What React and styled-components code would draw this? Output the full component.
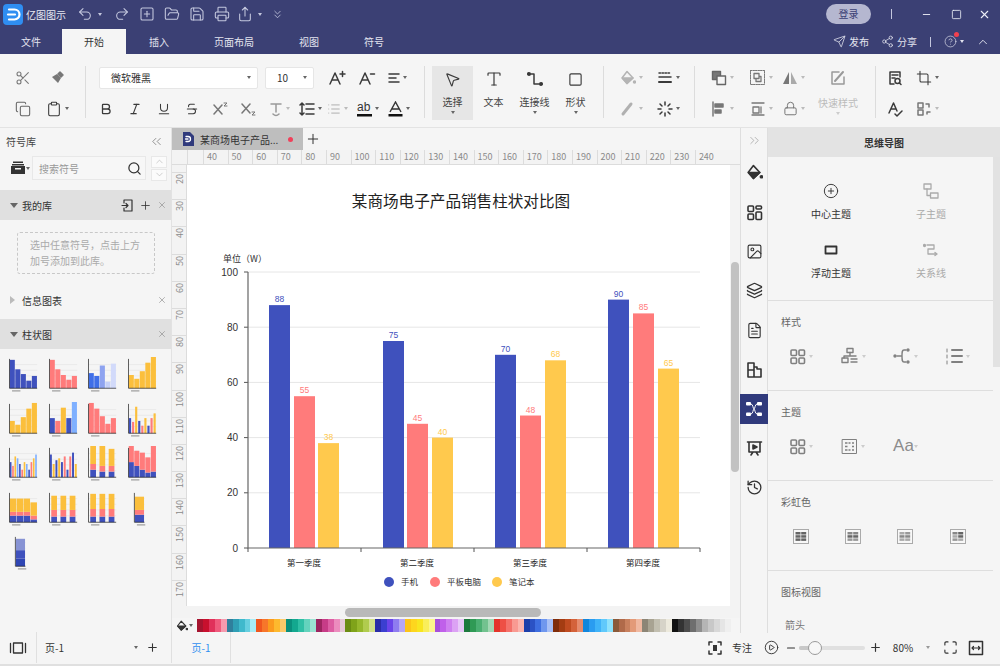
import React from 'react';
import styled, { createGlobalStyle } from 'styled-components';
import {
  Scissors, Copy, Clipboard, Bold, Italic, Underline, Strikethrough, MousePointer2, Type, Square,
  Search, Undo2, Redo2, SquarePlus, FolderOpen, Save, Printer, Share, ChevronsDown, Send, Share2,
  CircleHelp, ChevronUp, Minus, X, Plus, Image as ImageIcon, Layers, FileText, History, CirclePlus,
  ChevronsLeft, ChevronsRight, ChevronDown, List, Lock, CirclePlay, Maximize, Crop,
} from 'lucide-react';

const Global = createGlobalStyle`
  html, body { margin: 0; padding: 0; width: 1000px; height: 666px; overflow: hidden; }
  body { font-family: "Noto Sans CJK SC", "Liberation Sans", sans-serif; font-size: 10px; color: #333; background: #f5f5f5; }
  * { box-sizing: border-box; }
`;

const NAVY = '#3b4074';
const Shell = styled.div`display: flex; flex-direction: column; width: 1000px; height: 666px;`;

/* ---------- title bar ---------- */
const TitleBar = styled.header`display: flex; align-items: center; height: 28px; padding-right: 3px; background: ${NAVY}; color: #dfe1ee;`;
const LogoBox = styled.div`display: flex; width: 20px; height: 21px; margin-left: 3px; border-radius: 4px; background: #2f8ef2;`;
const AppName = styled.span`margin-left: 3px; width: 43px; font-size: 10px; color: #e8e9f2;`;
const QuickBtn = styled.button`
  all: unset; display: flex; align-items: center; justify-content: center; gap: 2px; width: ${p => p.$w || 25}px; height: 28px; color: #c4c7de;
`;
const TriangleEl = styled.i`
  display: inline-block; flex: none; width: 0; height: 0; margin-left: ${p => p.$gap ?? 3}px;
  border-left: 2.5px solid transparent; border-right: 2.5px solid transparent;
  border-top: 3px solid ${p => p.$c || '#666'};
`;
const Spring = styled.div`flex: 1;`;
const LoginPill = styled.button`
  all: unset; width: 45px; height: 20px; border-radius: 10px; background: #b5b7d0; color: #3b4074; text-align: center; line-height: 20px; font-size: 10px;
`;
const BarDivider = styled.i`display: block; width: 1px; height: 10px; background: #c4c7de;`;
const WinBtn = styled.button`all: unset; display: flex; align-items: center; justify-content: center; width: ${p => p.$w || 30}px; height: 28px; color: #eceef6;`;

const TabBar = styled.nav`display: flex; align-items: flex-end; height: 26px; background: ${NAVY};`;
const Tab = styled.div`
  width: ${p => p.$w}px; height: 25px; line-height: 25px; text-align: center; font-size: 10px;
  color: ${p => (p.$active ? '#333' : '#e3e4ef')}; background: ${p => (p.$active ? '#f5f5f5' : 'transparent')};
`;
const TabAction = styled.div`display: flex; align-items: center; gap: 3px; height: 25px; color: #e3e4ef; font-size: 10px; margin-left: ${p => p.$ml || 0}px;`;
const HelpWrap = styled.span`position: relative; display: flex;`;
const RedDot = styled.i`position: absolute; top: -3px; right: -2px; width: 5px; height: 5px; border-radius: 50%; background: #f2404f;`;

/* ---------- ribbon ---------- */
const Ribbon = styled.section`display: flex; height: 74px; background: #f5f5f5; border-bottom: 1px solid #e3e3e3;`;
const RibbonGroup = styled.div`
  flex: none; width: ${p => p.$w}px; padding-left: ${p => p.$pl || 0}px; padding-top: 8px; position: relative;
  &::after { content: ''; position: absolute; right: 0; top: 12px; width: 1px; height: 52px; background: ${p => (p.$last ? 'transparent' : '#dcdcdc')}; }
`;
const ToolRow = styled.div`display: flex; align-items: center; height: 31px; margin-left: ${p => p.$ml || 0}px;`;
const ToolCell = styled.div`
  display: flex; align-items: center; justify-content: center; flex: none; width: ${p => p.$w}px; height: 31px; margin-left: ${p => p.$ml || 0}px;
  color: ${p => (p.$off ? '#a9a9a9' : p.$c || '#3a3a3a')}; font-size: ${p => p.$fs || 13}px;
`;
const FontSelect = styled.div`
  display: flex; align-items: center; justify-content: space-between; flex: none; height: 22px; width: ${p => p.$w}px; margin-right: ${p => p.$mr || 0}px;
  padding: 0 6px 0 11px; background: #fff; border: 1px solid #e6e6e6; border-radius: 2px; font-size: 10px; color: #333;
`;
const TileRow = styled.div`display: flex; margin-top: 4px;`;
const Tile = styled.div`
  display: flex; flex-direction: column; align-items: center; width: 41px; height: 54px; padding-top: 2px;
  background: ${p => (p.$on ? '#e6e6e6' : 'transparent')}; color: #3a3a3a;
`;
const TileIcon = styled.div`display: flex; align-items: center; justify-content: center; height: 22px;`;
const TileLabel = styled.span`margin-top: 5px; line-height: 14px; font-size: 10px; color: #444;`;
const TileArrow = styled.i`
  display: block; margin-top: 2px; width: 0; height: 0; border-left: 2.5px solid transparent; border-right: 2.5px solid transparent; border-top: 3px solid ${p => p.$c || '#666'};
`;
const QuickLabel = styled.div`display: flex; flex-direction: column; align-items: center; flex: none; width: ${p => p.$w}px; height: 31px; padding-top: 3px; color: #bbb; font-size: 10px; line-height: 14px;`;

/* ---------- main ---------- */
const Main = styled.main`display: flex; height: 505px;`;

const LeftPanel = styled.aside`display: flex; flex-direction: column; flex: none; width: 172px; background: #f5f5f5; border-right: 1px solid #e2e2e2; overflow: hidden;`;
const PanelTitle = styled.div`display: flex; align-items: center; justify-content: space-between; height: 26px; padding: 0 7px 0 6px; font-size: 10px; color: #444;`;
const SearchRow = styled.div`display: flex; align-items: center; height: 28px; padding-left: 11px;`;
const DrawerBtn = styled.div`display: flex; align-items: center; width: 21px; color: #333;`;
const SearchBox = styled.div`display: flex; align-items: center; justify-content: space-between; width: 114px; height: 24px; padding: 0 3px 0 6px; background: #f7f7f7; border: 1px solid #e8e8e8; font-size: 10px; color: #999;`;
const Stepper = styled.div`display: flex; flex-direction: column; gap: 1px; margin-left: 5px;`;
const StepBtn = styled.div`display: flex; align-items: center; justify-content: center; width: 16px; height: 12px; background: #fbfbfb; border: 1px solid #e8e8e8; color: #aaa;`;
const LibHeader = styled.div`
  display: flex; align-items: center; height: ${p => p.$h || 30}px; margin-top: ${p => p.$mt || 0}px; padding: 0 4px 0 10px; gap: 5px;
  background: ${p => (p.$on ? '#e0e0e0' : 'transparent')}; color: #333; font-size: 10px;
`;
const LibMark = styled.i`
  width: 0; height: 0; flex: none;
  ${p => (p.$open
    ? 'border-left: 4px solid transparent; border-right: 4px solid transparent; border-top: 5px solid #666; margin-right:-1px;'
    : 'border-top: 4px solid transparent; border-bottom: 4px solid transparent; border-left: 5px solid #bbb; margin-right:2px;')}
`;
const LibName = styled.span`flex: 1;`;
const LibTool = styled.span`display: flex; color: ${p => p.$c || '#555'};`;
const DropHint = styled.div`margin: 12px 0 0 17px; width: 138px; height: 42px; padding: 4px 0 0 12px; border: 1.5px dashed #c8c8c8; border-radius: 3px; font-size: 10px; line-height: 16px; color: #aaa;`;
const ThumbGrid = styled.div`display: grid; grid-template-columns: repeat(4, 39.5px); grid-auto-rows: 44.5px; padding: 8px 0 0 7px;`;

const Center = styled.div`display: flex; flex-direction: column; flex: none; width: 568px;`;
const DocTabs = styled.div`display: flex; align-items: center; height: 22px; background: #f5f5f5;`;
const DocTab = styled.div`display: flex; align-items: center; width: 131px; height: 22px; padding-left: 10px; background: #bebebe; color: #333; font-size: 10px;`;
const DocTitle = styled.span`margin-left: 6px; width: 82px;`;
const DocDot = styled.i`width: 5px; height: 5px; border-radius: 50%; background: #f0405a; margin-left: 6px;`;
const AddTab = styled.span`display: flex; margin-left: 2px; color: #333;`;

const HRuler = styled.div`display: flex; height: 15px; padding-left: 15px; background: #f3f3f3; border-bottom: 1px solid #dcdcdc; overflow: hidden; color: #8a8a8a; font-size: 9px;`;
const HTick = styled.span`flex: none; width: ${p => p.$w || 24.6}px; height: 15px; padding-left: 3px; line-height: 14px; border-left: 1px solid #dcdcdc;`;
const CanvasRow = styled.div`position: relative; display: flex; height: 441px;`;
const VRuler = styled.div`flex: none; width: 15px; padding-top: 7px; background: #f3f3f3; border-right: 1px solid #dcdcdc; overflow: hidden; color: #8a8a8a; font-size: 9px;`;
const VTick = styled.div`
  display: flex; align-items: flex-start; justify-content: center; width: 15px; height: 27.2px; padding-top: 1px; border-top: 1px solid #dcdcdc;
  span { writing-mode: vertical-rl; transform: rotate(180deg); line-height: 12px; }
`;
const Page = styled.div`flex: 1; background: #fff;`;
const ChartSvg = styled.svg`display: block; width: 543px; height: 441px; font-family: "Noto Sans CJK SC", "Liberation Sans", sans-serif;`;
const VTrack = styled.div`flex: none; width: 10px; background: #f3f3f3;`;
const VThumb = styled.div`margin: 97px 0 0 1px; width: 8px; height: 210px; border-radius: 4px; background: #c2c2c2;`;
const HTrack = styled.div`display: flex; align-items: center; height: 12px; background: #f3f3f3; padding-left: 173px;`;
const HThumb = styled.div`width: 196px; height: 9px; border-radius: 5px; background: #b9b9b9;`;
const PaletteBar = styled.div`display: flex; align-items: center; height: 15px; background: #f5f5f5;`;
const PaletteBtn = styled.div`display: flex; align-items: center; justify-content: center; flex: none; width: 25px; color: #333;`;
const Chips = styled.div`display: flex; width: 534px; height: 13px;`;
const Chip = styled.i`flex: 1; background: ${p => p.$c};`;

const Rail = styled.div`display: flex; flex-direction: column; align-items: center; flex: none; width: 28px; background: #f5f5f5; border-left: 1px solid #dedede; border-right: 1px solid #dedede;`;
const RailTop = styled.div`display: flex; align-items: center; justify-content: center; height: 25px; color: #999;`;
const RailBtn = styled.div`
  display: flex; align-items: center; justify-content: center; flex: none; width: 28px; height: ${p => (p.$on ? 30 : 39.4)}px;
  margin: ${p => (p.$on ? '4.7px 0' : 0)}; background: ${p => (p.$on ? '#303a7c' : 'transparent')}; color: ${p => (p.$on ? '#fff' : '#333')};
`;

const RightPanel = styled.aside`position: relative; display: flex; flex-direction: column; flex: none; width: 232px; background: #f5f5f5;`;
const RightHead = styled.div`height: 29px; line-height: 29px; text-align: center; background: #e3e3e3; font-size: 10px; font-weight: 700; color: #333;`;
const RightBody = styled.div`width: 225px;`;
const RightThumb = styled.div`position: absolute; right: 0; top: 29px; width: 7px; height: 210px; background: #e2e2e2;`;
const TopicSection = styled.div`height: 144px; padding: 24px 0 0 13px; border-bottom: 1px solid #dedede;`;
const TopicGrid = styled.div`display: grid; grid-template-columns: 100px 100px; row-gap: 19px;`;
const TopicCell = styled.div`display: flex; flex-direction: column; align-items: center; height: 40px; color: ${p => (p.$off ? '#aaa' : '#333')};`;
const TopicIcon = styled.div`display: flex; align-items: center; justify-content: center; height: 20px; margin-bottom: 6px;`;
const TopicLabel = styled.span`line-height: 14px; font-size: 10px;`;
const PropSection = styled.div`height: 90px; padding-top: 14px; border-bottom: ${p => (p.$plain ? 0 : '1px solid #dedede')};`;
const PropTitle = styled.div`padding-left: 13px; line-height: 14px; font-size: 10px; color: #666;`;
const PropGrid = styled.div`display: grid; grid-template-columns: repeat(4, 52.2px); padding-left: 7px; margin-top: 16px; color: #808080;`;
const PropCell = styled.div`display: flex; align-items: center; justify-content: center; height: 22px;`;
const AaLabel = styled.span`font-family: "Liberation Sans", sans-serif; font-size: 17px; color: #8c8c8c;`;
const SubLabel = styled.div`padding: 18px 0 0 17px; color: #777; font-size: 10px;`;

/* ---------- status bar ---------- */
const StatusBar = styled.footer`display: flex; align-items: center; height: 33px; padding-bottom: 2px; background: #f5f5f5; border-bottom: 2px solid #e0e0e0; font-size: 10px; color: #333;`;
const StatusCell = styled.div`
  display: flex; align-items: center; justify-content: ${p => (p.$between ? 'space-between' : 'center')}; flex: none; width: ${p => p.$w}px; height: 31px;
  padding: ${p => (p.$between ? '0 4px 0 8px' : `0 ${p.$pr || 0}px 0 0`)}; border-right: ${p => (p.$sep ? '1px solid #e0e0e0' : 0)};
  color: ${p => p.$c || '#333'};
`;
const Slider = styled.div`position: relative; width: 66px; height: 4px; border-radius: 2px; background: #e0e0e0;`;
const SliderFill = styled.div`width: 15px; height: 4px; border-radius: 2px; background: #c8c8c8;`;
const SliderKnob = styled.div`position: absolute; left: 9px; top: -5px; width: 14px; height: 14px; border-radius: 50%; background: #f7f7f7; border: 1.5px solid #9a9a9a;`;

/* ---------- custom drawings ---------- */
const Svg = ({ s = 16, w, h, vb, children, sw = 1.5, ...r }) => (
  <svg width={w || s} height={h || s} viewBox={vb || `0 0 ${w || s} ${h || s}`} fill="none" stroke="currentColor" strokeWidth={sw} strokeLinecap="round" strokeLinejoin="round" {...r}>{children}</svg>
);
const Tri = ({ c, gap }) => <TriangleEl $c={c} $gap={gap} />;

const LogoMark = () => (
  <Svg w={20} h={21} stroke="#fff" sw={2.2}><path d="M6 5.5h5.5a5 5 0 0 1 0 10H6" /><path d="M5 10.5h7" /></Svg>
);
const Broom = () => <Svg stroke="#777"><path d="M11 2l3 3-2 2-3-3z" fill="#777" /><path d="M3 7l5-3 4 4-3 5z" fill="#777" stroke="none" /></Svg>;
const APlus = ({ sign }) => (
  <Svg w={18} h={16}><path d="M2 14L7 3l5 11M4 10h6" /><path d={sign === '+' ? 'M12 4h5M14.5 1.500v5' : 'M12.500 4h4'} /></Svg>
);
const AlignIcon = () => <Svg w={12} h={12}><path d="M1 2h10M1 6h7M1 10h10" /></Svg>;
const SupIcon = ({ sub }) => (
  <Svg w={16} h={14} stroke="#777"><path d={sub ? 'M1 2l8 9M9 2l-8 9' : 'M1 3l8 9M9 3l-8 9'} /><path d={sub ? 'M11 10h3l-3 3h3' : 'M11 1h3l-3 3h3'} strokeWidth={1} /></Svg>
);
const TUnder = () => <Svg w={14} h={16} stroke="#999"><path d="M2 3h10M7 3v8M4 13c2 2 4 2 6 0" /></Svg>;
const LineSp = () => <Svg w={16} h={14}><path d="M3 1v12M1 3l2-2 2 2M1 11l2 2 2-2M7 2h8M7 7h8M7 12h8" /></Svg>;
const AbIcon = () => (
  <svg width="15" height="16" viewBox="0 0 15 16"><rect x="0" y="13" width="15" height="2.500" fill="#111" /><text x="0" y="10" fontSize="12" fill="#333" fontFamily="Liberation Sans">ab</text></svg>
);
const ACol = () => (
  <svg width="15" height="16" viewBox="0 0 15 16"><rect x="0.500" y="13" width="14" height="2.500" fill="#111" /><path d="M2 11L7.500 1 13 11M4 8h7" stroke="#333" strokeWidth="1.400" fill="none" /></svg>
);
const Connector = () => <Svg><circle cx="2" cy="3" r="1.300" fill="currentColor" /><circle cx="14" cy="13" r="1.300" fill="currentColor" /><path d="M4 3h3v10h5" /></Svg>;
const Fill = ({ c = '#aaa', s = 16 }) => (
  <Svg s={s} vb="0 0 16 16" stroke={c}><path d="M7 1.500L2 8l5 5.500L13 8z" /><path d="M2.500 8H13L7 13.500z" fill={c} /><circle cx="14.500" cy="12" r="1" fill={c} /></Svg>
);
const Dashes = () => <Svg><path d="M2 3h12" strokeDasharray="1.500 1.500" /><path d="M2 7h12" /><path d="M2 12h12" strokeWidth={2} /></Svg>;
const Pen = () => <Svg stroke="#b0b0b0"><path d="M3 13L11 3" strokeWidth={3} /></Svg>;
const Spark = () => <Svg><path d="M8 1v3M8 12v3M1 8h3M12 8h3M3 3l2 2M11 11l2 2M13 3l-2 2M5 11l-2 2" /></Svg>;
const Front = () => (
  <Svg stroke="#666" sw={1.4}><rect x="1.500" y="1.500" width="8" height="8" fill="#777" /><rect x="6" y="6" width="8.500" height="8.500" fill="#f5f5f5" /></Svg>
);
const GroupIc = () => (
  <Svg w={17} h={17} stroke="#777" sw={1}><rect x="1.500" y="1.500" width="14" height="14" strokeDasharray="1.500 1" /><path d="M5 4.500h5v5H5zM7 9.500v3h5v-5h-2" strokeWidth={1.300} /></Svg>
);
const Flip = () => <svg width="16" height="14" viewBox="0 0 16 14"><path d="M7 1v12H1z" fill="#777" /><path d="M9 1v12h6z" fill="#aaa" /></svg>;
const Quick = () => <Svg stroke="#999"><path d="M9 2H2v12h12V7" /><path d="M5 11l8-9" strokeWidth={2} /></Svg>;
const AlignL = () => <Svg stroke="#777"><path d="M2 1v14" /><rect x="4" y="3" width="8" height="3" fill="#777" /><rect x="4" y="9" width="6" height="3" fill="#777" /></Svg>;
const DistV = () => <Svg stroke="#777" sw={1.300}><path d="M2 2h12M2 14h12" /><rect x="3" y="6" width="6" height="6" /><path d="M11 6v6" /></Svg>;
const DocFind = () => <Svg><path d="M13 7V2H3v12h4M5 5h6M5 8h3" /><circle cx="10.500" cy="11" r="2.500" /><path d="M12.500 13l1.500 1.500" /></Svg>;
const SpellA = () => <Svg><path d="M2 12L6.500 2 10 10M4 8h5M8 13l2 2 5-5" /></Svg>;
const Replace = () => <Svg stroke="#777"><rect x="2" y="2" width="5" height="5" /><rect x="2" y="9" width="5" height="5" /><path d="M10 3h3v3M14 11h-3v2" /></Svg>;
const DocLogo = () => (
  <Svg w={12} h={14} stroke="#fff" sw={1.300}><path d="M1 0h7l4 4v10H1z" fill="#303a7c" stroke="none" /><path d="M4 4.500h2a2.500 2.500 0 0 1 0 5H4M3.500 7H6" /></Svg>
);
const Drawer = () => (
  <svg width="14" height="14" viewBox="0 0 14 14"><rect x="0" y="5" width="14" height="8" fill="#333" /><rect x="2" y="0.500" width="10" height="1.500" fill="#333" /><rect x="1" y="3" width="12" height="1.500" fill="#333" /><rect x="4" y="7" width="6" height="1.500" fill="#f5f5f5" /></svg>
);
const Import = () => <Svg w={13} h={13} sw={1.200}><path d="M3 1h8v11H3V9M3 4V1" /><path d="M1 6.500h6M5 4.500l2 2-2 2" /></Svg>;
const FourSq = () => (
  <Svg s={17} sw={1.600}><rect x="2" y="2" width="5.500" height="5.500" rx="1" /><rect x="10" y="2" width="5.500" height="5.500" rx="1" /><rect x="2" y="10" width="5.500" height="5.500" rx="1" /><rect x="10" y="10" width="5.500" height="5.500" rx="1" /></Svg>
);
const LayoutIc = () => <Svg s={17} sw={1.600}><rect x="2" y="2" width="5.500" height="5.500" rx="1" /><rect x="10" y="2" width="5.500" height="3" rx="1" /><rect x="2" y="10" width="5.500" height="5.500" rx="1" /><rect x="10" y="8" width="5.500" height="7.500" rx="1" /></Svg>;
const PuzzleIc = () => <Svg s={17} sw={1.600}><path d="M2 2h6v4h3v2h4v8H2zM2 9h6v7M8 6v3" /></Svg>;
const MindIc = () => (
  <svg width="16" height="14" viewBox="0 0 16 14" fill="#fff"><rect x="0" y="0" width="5" height="3.500" rx="1" /><rect x="11" y="0" width="5" height="3.500" rx="1" /><rect x="0" y="10.500" width="5" height="3.500" rx="1" /><rect x="11" y="10.500" width="5" height="3.500" rx="1" /><path d="M5 2c2 0 2 5 3 5s1-5 3-5M5 12c2 0 2-5 3-5s1 5 3 5" stroke="#fff" strokeWidth="1" fill="none" /></svg>
);
const Board = () => <Svg s={17} sw={1.600}><path d="M1.500 2h14M3 2v10h11V2M5 15l2-3M12 15l-2-3" /><path d="M7 5l4 2-4 2z" fill="currentColor" /></Svg>;
const SubTopic = () => <Svg w={16} h={16} sw={1.300}><rect x="1" y="1" width="7" height="5" /><rect x="7.500" y="10" width="7.500" height="5" /><path d="M4 6v6.500h3.500" /></Svg>;
const FloatTopic = () => <Svg w={14} h={10} sw={1.800}><rect x="1.500" y="1.500" width="11" height="7" /></Svg>;
const Relation = () => <Svg w={16} h={14} sw={1.300}><circle cx="1.500" cy="2.500" r="1" fill="currentColor" /><path d="M4 2h7v4H5v5h7M12 9.500l2 1.500-2 1.500" /></Svg>;
const TreeIc = () => <Svg s={18} sw={1.400}><rect x="6" y="1.500" width="6" height="4" /><path d="M9 5.500V9M3 9h12M3 9v2" /><rect x="1" y="11" width="6" height="4.500" /><path d="M10 12h6M10 15h6" /></Svg>;
const FishIc = () => <Svg s={18} sw={1.400}><circle cx="2" cy="9" r="1" fill="currentColor" /><path d="M4 9h5M13 3h-2c-2 0-2 2-2 6s0 6 2 6h2" /><circle cx="15" cy="3" r="1" fill="currentColor" /><circle cx="15" cy="15" r="1" fill="currentColor" /></Svg>;
const NumIc = () => <Svg s={18} sw={2}><path d="M7 3h10M7 9h10M7 15h10" /><path d="M2 2v3M2 8v3M2 14v3" strokeWidth={1} /></Svg>;
const DotGrid = () => <Svg s={17} sw={1}><rect x="1.500" y="1.500" width="14" height="14" /><path d="M4 5h2.500M7.500 5h2M11 5h2M4 8.500h2.500M11 8.500h2M4 12h2.500M7.500 12h2M11 12h2" strokeWidth={1.500} strokeLinecap="butt" /></Svg>;
const Rainbow = ({ v }) => {
  const fills = [['#666', '#666', '#666', '#666', '#666', '#666'], ['#888', '#888', '#666', '#666', '#999', '#999'], ['#aaa', '#999', '#888', '#888', '#aaa', '#aaa'], ['#888', '#666', '#aaa', '#666', '#999', '#aaa']][v];
  return (
    <svg width="16" height="15" viewBox="0 0 16 15">
      <rect x="0.500" y="0.500" width="15" height="14" fill="#f8f8f8" stroke="#aaa" />
      {fills.map((f, i) => <rect key={i} x={2.5 + (i % 2) * 5.7} y={3 + Math.floor(i / 2) * 3.2} width="5" height="2.500" fill={f} />)}
    </svg>
  );
};
const Slide = () => <Svg w={18} h={14} sw={1.300}><rect x="4.500" y="2" width="9" height="10" /><path d="M1.500 2.500v9M16.500 2.500v9" /></Svg>;
const Focus = () => <Svg sw={1.500}><path d="M2 5V2h3M11 2h3v3M14 11v3h-3M5 14H2v-3" /><rect x="6" y="5" width="4" height="6" fill="currentColor" stroke="none" /></Svg>;
const FitW = () => <Svg sw={1.500}><rect x="1.500" y="1.500" width="13" height="13" /><path d="M4.500 8h7M5.500 6.500L4 8l1.500 1.500M10.500 6.500L12 8l-1.500 1.500" strokeWidth={1.200} /></Svg>;

/* ---------- symbol thumbnails ---------- */
const B = '#3f51bd', R = '#ff7b7b', Y = '#fbbf3c', L = '#7fb0ff';
const THUMBS = [
  { bars: [[B, 30], [B, 20], [B, 15], [B, 8], [B, 13]] },
  { bars: [[R, 30], [R, 20], [R, 14], [R, 9], [R, 13]] },
  { bars: [['#3f6fe8', 16], ['#3f6fe8', 13], ['#8ea3f0', 24], ['#c5d0f8', 7], ['#d2dafa', 26]] },
  { bars: [[Y, 14], [Y, 10], [Y, 18], [Y, 27], [Y, 33]] },
  { bars: [[Y, 13], [Y, 9], [Y, 17], [Y, 26], [Y, 32]] },
  { bars: [[B, 16], [R, 13], [Y, 27], [B, 16], [L, 33]] },
  { bars: [[R, 32], [R, 26], [R, 18], [R, 10], [R, 16]] },
  { bars: [[B, 16], [R, 12], [Y, 28], [B, 13], [R, 8], [Y, 16], [B, 8], [R, 16], [Y, 21]] },
  { bars: [[B, 16], [R, 12], [Y, 22], [L, 20], [B, 14], [R, 8], [Y, 16], [L, 14], [B, 8], [R, 16], [Y, 20], [L, 24]] },
  { bars: [[B, 24], [Y, 14], [B, 18], [Y, 20], [B, 16], [R, 22], [B, 8], [R, 22], [B, 26], [Y, 14]] },
  { wide: true, bars: [[[B, 8], [R, 6], [Y, 20]], [[B, 6], [R, 6], [Y, 22]], [[B, 6], [R, 6], [Y, 18]]] },
  { tight: true, bars: [[[B, 16], [R, 18]], [[B, 12], [R, 16]], [[B, 8], [R, 18]], [[B, 5], [R, 16]], [[B, 6], [R, 28]]] },
  { tight: true, bars: [[[B, 7], [R, 4], [Y, 14]], [[B, 7], [R, 4], [Y, 14]], [[B, 7], [R, 4], [Y, 14]], [[B, 3], [R, 4], [Y, 14]]] },
  { wide: true, bars: [[[B, 6], [R, 7], [Y, 15]], [[B, 6], [R, 7], [Y, 15]], [[B, 6], [R, 7], [Y, 15]]] },
  { wide: true, bars: [[[B, 6], [R, 8], [Y, 16]], [[B, 6], [R, 8], [Y, 16]], [[B, 6], [R, 8], [Y, 16]]] },
  { single: true, bars: [[[B, 8], [R, 5], [Y, 14]]] },
  { single: true, bars: [[['#2f46b4', 8], ['#3f51bd', 9], ['#8793d4', 12]]] },
];
const Thumb = ({ t }) => {
  const base = 33, left = t.single ? 10 : 3, right = t.single ? 22 : 36;
  const n = t.bars.length;
  const slot = (right - left) / n;
  const w = t.tight ? slot - 0.5 : t.wide ? slot * 0.62 : slot * (n > 6 ? 0.7 : 0.92);
  return (
    <svg width="31" height="36" viewBox="0 0 37 38" preserveAspectRatio="none">
      {[8, 14, 20, 26].map(y => <line key={y} x1={left} x2={right} y1={y} y2={y} stroke="#ddd" strokeWidth="0.500" />)}
      {t.bars.map((b, i) => {
        const x = left + i * slot + (slot - w) / 2;
        if (typeof b[0] === 'string') return <rect key={i} x={x} y={base - b[1]} width={w} height={b[1]} fill={b[0]} />;
        let y = base;
        return <g key={i}>{b.map(([c, h], j) => { y -= h; return <rect key={j} x={x} y={y} width={w} height={h} fill={c} />; })}</g>;
      })}
      <path d={`M${left} 2V${base}H${right}`} stroke="#222" strokeWidth="0.800" fill="none" />
      <rect x={left + 3} y="35" width="10" height="1.500" fill="#aaa" />
    </svg>
  );
};

/* ---------- chart ---------- */
const GROUPS = [
  { name: '第一季度', cx: 304, xs: [269, 294, 318], v: [88, 55, 38] },
  { name: '第二季度', cx: 417, xs: [383, 407, 432], v: [75, 45, 40] },
  { name: '第三季度', cx: 530, xs: [495, 520, 545], v: [70, 48, 68] },
  { name: '第四季度', cx: 643, xs: [608, 633, 658], v: [90, 85, 65] },
];
const BAR = ['#3f51bd', '#ff7b7b', '#ffc94d'];
const yOf = v => 548 - v * 2.76;
const Chart = () => (
  <ChartSvg viewBox="187 165 543 441">
    <text x="461" y="207" fontSize="15.600" textAnchor="middle" fill="#222">某商场电子产品销售柱状对比图</text>
    <text x="223" y="262" fontSize="9" fill="#333">单位（W）</text>
    {[100, 80, 60, 40, 20].map(v => <line key={v} x1="248" x2="700" y1={yOf(v)} y2={yOf(v)} stroke="#e6e6e6" />)}
    {[100, 80, 60, 40, 20, 0].map(v => (
      <g key={v}>
        <line x1="244" x2="248" y1={yOf(v)} y2={yOf(v)} stroke="#555" />
        <text x="238" y={yOf(v) + 3.5} fontSize="10" textAnchor="end" fill="#333" fontFamily="Liberation Sans">{v}</text>
      </g>
    ))}
    {GROUPS.map(g => (
      <g key={g.name}>
        {g.v.map((v, i) => (
          <g key={i}>
            <rect x={g.xs[i]} y={yOf(v)} width="21" height={v * 2.76} fill={BAR[i]} />
            <text x={g.xs[i] + 10.5} y={yOf(v) - 3} fontSize="8.500" textAnchor="middle" fill={BAR[i]} fontFamily="Liberation Sans">{v}</text>
          </g>
        ))}
        <text x={g.cx} y="566" fontSize="8.500" textAnchor="middle" fill="#222">{g.name}</text>
      </g>
    ))}
    <path d="M248 272V548H700" stroke="#666" strokeWidth="1.200" fill="none" />
    {[248, 361, 474, 587, 700].map(x => <line key={x} x1={x} x2={x} y1="548" y2="552" stroke="#555" />)}
    {[[389, '手机', 0], [435, '平板电脑', 1], [497, '笔记本', 2]].map(([x, t, i]) => (
      <g key={t}>
        <circle cx={x} cy="582" r="5" fill={BAR[i]} />
        <text x={x + 12} y="585" fontSize="8.500" fill="#333">{t}</text>
      </g>
    ))}
  </ChartSvg>
);

const PALETTE = [
  '#a5142f,#c8102e,#e0315a,#ef5a7c,#f59aae', '#2f7f9c,#2f9fb5,#3fb9cc,#66cfe0,#a8ecf5',
  '#f0561e,#f7762a,#fb9a1e,#fdb92e,#fcc96a', '#0a8f7c,#13a88f,#2fbfa5,#63d3bd,#9be3d3',
  '#9c2560,#c73c87,#dd5ea3,#ec8cbe,#e5c9d6', '#6a8c12,#7fa31a,#96b82c,#b0cc4e,#d2e08a',
  '#2a2ca8,#3b3fd0,#6a44ea,#8f7cf0,#b6a6f5', '#fcc418,#fdd61e,#f8e520,#f9ee5a,#fbf58c',
  '#a64fdc,#c060ea,#cf80f0,#dca2f4,#e8c8f8', '#1d7a3e,#2f9a55,#4aaf72,#72c28f,#a2d8b4',
  '#e4332a,#ee4f45,#f4716a,#f99a92,#fbb5ae', '#1c3faa,#2b52c4,#3e6ee0,#6f97ee,#a8c0f6',
  '#7f2d0a,#a33c12,#bf4b20,#d4623a,#e68b6c', '#1186dc,#2a9cf0,#3fb3f8,#60c9fb,#8ee2fc',
  '#8a5a3a,#b06a4a,#c8805e,#e39a78,#f0b8a0', '#8c8576,#a8a392,#c2bfb0,#d6d3c8,#ece9dc',
  '#111111,#333333,#4d4d4d,#6e6e6e,#8e8e8e', '#b5b5b5,#c8c8c8,#d8d8d8,#e5e5e5,#efefef',
].join(',').split(',');

const hTicks = Array.from({ length: 22 }, (_, i) => 30 + i * 10);
const vTicks = Array.from({ length: 16 }, (_, i) => 20 + i * 10);

const ic = { size: 16, strokeWidth: 1.6 };

export default function App() {
  return (
    <Shell>
      <Global />
      <TitleBar>
        <LogoBox><LogoMark /></LogoBox>
        <AppName>亿图图示</AppName>
        <QuickBtn $w={40}><Undo2 {...ic} /><Tri c="#c4c7de" /></QuickBtn>
        <QuickBtn $w={25}><Redo2 {...ic} /></QuickBtn>
        <QuickBtn><SquarePlus {...ic} /></QuickBtn>
        <QuickBtn><FolderOpen {...ic} /></QuickBtn>
        <QuickBtn><Save {...ic} /></QuickBtn>
        <QuickBtn><Printer {...ic} /></QuickBtn>
        <QuickBtn $w={30}><Share {...ic} /><Tri c="#c4c7de" /></QuickBtn>
        <QuickBtn $w={26}><ChevronsDown size={13} strokeWidth={1.5} /></QuickBtn>
        <Spring />
        <LoginPill>登录</LoginPill>
        <WinBtn $w={40}><BarDivider /></WinBtn>
        <WinBtn><Minus size={11} strokeWidth={2} /></WinBtn>
        <WinBtn><Square size={11} strokeWidth={1.8} /></WinBtn>
        <WinBtn $w={26}><X size={13} strokeWidth={2} /></WinBtn>
      </TitleBar>
      <TabBar>
        <Tab $w={62}>文件</Tab>
        <Tab $w={64} $active>开始</Tab>
        <Tab $w={66}>插入</Tab>
        <Tab $w={84}>页面布局</Tab>
        <Tab $w={66}>视图</Tab>
        <Tab $w={64}>符号</Tab>
        <Spring />
        <TabAction><Send size={13} strokeWidth={1.4} />发布</TabAction>
        <TabAction $ml={12}><Share2 size={13} strokeWidth={1.4} />分享</TabAction>
        <TabAction $ml={13}><BarDivider /></TabAction>
        <TabAction $ml={13}><HelpWrap><CircleHelp size={13} strokeWidth={1.2} /><RedDot /></HelpWrap><Tri c="#e3e4ef" gap={0} /></TabAction>
        <TabAction $ml={12}><ChevronUp size={14} strokeWidth={1.6} /></TabAction>
        <TabAction $ml={10} />
      </TabBar>

      <Ribbon>
        <RibbonGroup $w={86} $pl={6}>
          <ToolRow>
            <ToolCell $w={34} $c="#777"><Scissors {...ic} /></ToolCell>
            <ToolCell $w={34}><Broom /></ToolCell>
          </ToolRow>
          <ToolRow>
            <ToolCell $w={34} $c="#666"><Copy {...ic} /></ToolCell>
            <ToolCell $w={34}><Clipboard {...ic} /><Tri /></ToolCell>
          </ToolRow>
        </RibbonGroup>
        <RibbonGroup $w={339} $pl={5}>
          <ToolRow $ml={8}>
            <FontSelect $w={159} $mr={7}>微软雅黑<Tri gap={0} /></FontSelect>
            <FontSelect $w={49}>10<Tri gap={0} /></FontSelect>
            <ToolCell $w={30} $ml={8}><APlus sign="+" /></ToolCell>
            <ToolCell $w={30}><APlus sign="-" /></ToolCell>
            <ToolCell $w={30}><AlignIcon /><Tri /></ToolCell>
          </ToolRow>
          <ToolRow>
            <ToolCell $w={29}><Bold size={14} strokeWidth={2.2} /></ToolCell>
            <ToolCell $w={29}><Italic size={14} strokeWidth={2} /></ToolCell>
            <ToolCell $w={29}><Underline size={14} strokeWidth={1.8} /></ToolCell>
            <ToolCell $w={28}><Strikethrough size={14} strokeWidth={1.8} /></ToolCell>
            <ToolCell $w={29}><SupIcon /></ToolCell>
            <ToolCell $w={28}><SupIcon sub /></ToolCell>
            <ToolCell $w={32}><TUnder /><Tri c="#bbb" /></ToolCell>
            <ToolCell $w={30}><LineSp /><Tri /></ToolCell>
            <ToolCell $w={24} $off><List size={14} strokeWidth={1.6} /><Tri c="#bbb" /></ToolCell>
            <ToolCell $w={38}><AbIcon /><Tri /></ToolCell>
            <ToolCell $w={24}><ACol /><Tri /></ToolCell>
          </ToolRow>
        </RibbonGroup>
        <RibbonGroup $w={179} $pl={7}>
          <TileRow>
            <Tile $on><TileIcon><MousePointer2 size={17} strokeWidth={1.6} /></TileIcon><TileLabel>选择</TileLabel><TileArrow /></Tile>
            <Tile><TileIcon><Type size={18} strokeWidth={1.6} /></TileIcon><TileLabel>文本</TileLabel></Tile>
            <Tile><TileIcon><Connector /></TileIcon><TileLabel>连接线</TileLabel><TileArrow /></Tile>
            <Tile><TileIcon><Square size={15} strokeWidth={1.8} /></TileIcon><TileLabel>形状</TileLabel><TileArrow /></Tile>
          </TileRow>
        </RibbonGroup>
        <RibbonGroup $w={91} $pl={8}>
          <ToolRow>
            <ToolCell $w={38}><Fill c="#b4b4b4" /><Tri c="#bbb" /></ToolCell>
            <ToolCell $w={36}><Dashes /><Tri /></ToolCell>
          </ToolRow>
          <ToolRow>
            <ToolCell $w={38}><Pen /><Tri c="#bbb" /></ToolCell>
            <ToolCell $w={36}><Spark /><Tri /></ToolCell>
          </ToolRow>
        </RibbonGroup>
        <RibbonGroup $w={181} $pl={8}>
          <ToolRow>
            <ToolCell $w={38}><Front /><Tri c="#bbb" /></ToolCell>
            <ToolCell $w={40}><GroupIc /><Tri c="#bbb" /></ToolCell>
            <ToolCell $w={25}><Flip /><Tri c="#bbb" /></ToolCell>
            <ToolCell $w={64}><Quick /></ToolCell>
          </ToolRow>
          <ToolRow>
            <ToolCell $w={38}><AlignL /><Tri c="#bbb" /></ToolCell>
            <ToolCell $w={40}><DistV /><Tri c="#bbb" /></ToolCell>
            <ToolCell $w={25} $c="#777"><Lock size={15} strokeWidth={1.6} /><Tri c="#bbb" /></ToolCell>
            <QuickLabel $w={64}>快速样式<TileArrow $c="#ccc" /></QuickLabel>
          </ToolRow>
        </RibbonGroup>
        <RibbonGroup $w={124} $pl={4} $last>
          <ToolRow>
            <ToolCell $w={30}><DocFind /></ToolCell>
            <ToolCell $w={35}><Crop {...ic} /><Tri /></ToolCell>
          </ToolRow>
          <ToolRow>
            <ToolCell $w={30}><SpellA /></ToolCell>
            <ToolCell $w={35}><Replace /><Tri c="#bbb" /></ToolCell>
          </ToolRow>
        </RibbonGroup>
      </Ribbon>

      <Main>
        <LeftPanel>
          <PanelTitle>符号库<ChevronsLeft size={15} strokeWidth={1.1} color="#666" /></PanelTitle>
          <SearchRow>
            <DrawerBtn><Drawer /><Tri gap={1} /></DrawerBtn>
            <SearchBox>搜索符号<Search size={15} strokeWidth={2} color="#333" /></SearchBox>
            <Stepper>
              <StepBtn><ChevronUp size={11} strokeWidth={1.2} /></StepBtn>
              <StepBtn><ChevronDown size={11} strokeWidth={1.2} /></StepBtn>
            </Stepper>
          </SearchRow>
          <LibHeader $on $mt={8}>
            <LibMark $open /><LibName>我的库</LibName>
            <LibTool $c="#333"><Import /></LibTool>
            <LibTool $c="#333"><Plus size={13} strokeWidth={1.5} /></LibTool>
            <LibTool $c="#888"><X size={10} strokeWidth={1.5} /></LibTool>
          </LibHeader>
          <DropHint>选中任意符号，点击上方<br />加号添加到此库。</DropHint>
          <LibHeader $mt={11} $h={30}>
            <LibMark /><LibName>信息图表</LibName>
            <LibTool $c="#888"><X size={10} strokeWidth={1.5} /></LibTool>
          </LibHeader>
          <LibHeader $on $mt={4}>
            <LibMark $open /><LibName>柱状图</LibName>
            <LibTool $c="#888"><X size={10} strokeWidth={1.5} /></LibTool>
          </LibHeader>
          <ThumbGrid>{THUMBS.map((t, i) => <Thumb key={i} t={t} />)}</ThumbGrid>
        </LeftPanel>

        <Center>
          <DocTabs>
            <DocTab><DocLogo /><DocTitle>某商场电子产品...</DocTitle><DocDot /></DocTab>
            <AddTab><Plus size={16} strokeWidth={1.5} /></AddTab>
          </DocTabs>
          <HRuler>{hTicks.map(n => <HTick key={n} $w={n === 30 ? 16 : 24.6}>{n === 30 ? '' : n}</HTick>)}</HRuler>
          <CanvasRow>
            <VRuler>{vTicks.map(n => <VTick key={n}><span>{n}</span></VTick>)}</VRuler>
            <Page><Chart /></Page>
            <VTrack><VThumb /></VTrack>
          </CanvasRow>
          <HTrack><HThumb /></HTrack>
          <PaletteBar>
            <PaletteBtn><Fill c="#333" s={12} /><Tri gap={1} /></PaletteBtn>
            <Chips>{PALETTE.map((c, i) => <Chip key={i} $c={c} />)}</Chips>
          </PaletteBar>
        </Center>

        <Rail>
          <RailTop><ChevronsRight size={15} strokeWidth={1.1} /></RailTop>
          <RailBtn><Fill c="#333" s={17} /></RailBtn>
          <RailBtn><LayoutIc /></RailBtn>
          <RailBtn><ImageIcon size={17} strokeWidth={1.6} /></RailBtn>
          <RailBtn><Layers size={17} strokeWidth={1.8} /></RailBtn>
          <RailBtn><FileText size={17} strokeWidth={1.6} /></RailBtn>
          <RailBtn><PuzzleIc /></RailBtn>
          <RailBtn $on><MindIc /></RailBtn>
          <RailBtn><Board /></RailBtn>
          <RailBtn><History size={17} strokeWidth={1.8} /></RailBtn>
        </Rail>

        <RightPanel>
          <RightHead>思维导图</RightHead>
          <RightThumb />
          <RightBody>
            <TopicSection>
              <TopicGrid>
                <TopicCell><TopicIcon><CirclePlus size={16} strokeWidth={1.4} /></TopicIcon><TopicLabel>中心主题</TopicLabel></TopicCell>
                <TopicCell $off><TopicIcon><SubTopic /></TopicIcon><TopicLabel>子主题</TopicLabel></TopicCell>
                <TopicCell><TopicIcon><FloatTopic /></TopicIcon><TopicLabel>浮动主题</TopicLabel></TopicCell>
                <TopicCell $off><TopicIcon><Relation /></TopicIcon><TopicLabel>关系线</TopicLabel></TopicCell>
              </TopicGrid>
            </TopicSection>
            <PropSection>
              <PropTitle>样式</PropTitle>
              <PropGrid>
                <PropCell><FourSq /><Tri c="#ccc" /></PropCell>
                <PropCell><TreeIc /><Tri c="#ccc" /></PropCell>
                <PropCell><FishIc /><Tri c="#ccc" /></PropCell>
                <PropCell><NumIc /><Tri c="#ccc" /></PropCell>
              </PropGrid>
            </PropSection>
            <PropSection>
              <PropTitle>主题</PropTitle>
              <PropGrid>
                <PropCell><FourSq /><Tri c="#ccc" /></PropCell>
                <PropCell><DotGrid /><Tri c="#ccc" /></PropCell>
                <PropCell><AaLabel>Aa</AaLabel><Tri c="#ccc" gap={0} /></PropCell>
              </PropGrid>
            </PropSection>
            <PropSection>
              <PropTitle>彩虹色</PropTitle>
              <PropGrid>
                {[0, 1, 2, 3].map(v => <PropCell key={v}><Rainbow v={v} /></PropCell>)}
              </PropGrid>
            </PropSection>
            <PropSection $plain>
              <PropTitle>图标视图</PropTitle>
              <SubLabel>箭头</SubLabel>
            </PropSection>
          </RightBody>
        </RightPanel>
      </Main>

      <StatusBar>
        <StatusCell $w={37} $sep><Slide /></StatusCell>
        <StatusCell $w={105} $between>页-1<Tri gap={0} /></StatusCell>
        <StatusCell $w={30} $pr={8} $sep><Plus size={13} strokeWidth={2} /></StatusCell>
        <StatusCell $w={59} $sep $c="#2f8ff0">页-1</StatusCell>
        <Spring />
        <StatusCell $w={20}><Focus /></StatusCell>
        <StatusCell $w={34}>专注</StatusCell>
        <StatusCell $w={24}><CirclePlay size={15} strokeWidth={1.5} /></StatusCell>
        <StatusCell $w={16}><Minus size={12} strokeWidth={2.2} /></StatusCell>
        <Slider><SliderFill /><SliderKnob /></Slider>
        <StatusCell $w={20}><Plus size={13} strokeWidth={2.2} /></StatusCell>
        <StatusCell $w={36}>80%</StatusCell>
        <StatusCell $w={14}><Tri c="#999" gap={0} /></StatusCell>
        <StatusCell $w={30}><Maximize size={15} strokeWidth={1.8} /></StatusCell>
        <StatusCell $w={22}><FitW /></StatusCell>
        <StatusCell $w={13} />
      </StatusBar>
    </Shell>
  );
}
